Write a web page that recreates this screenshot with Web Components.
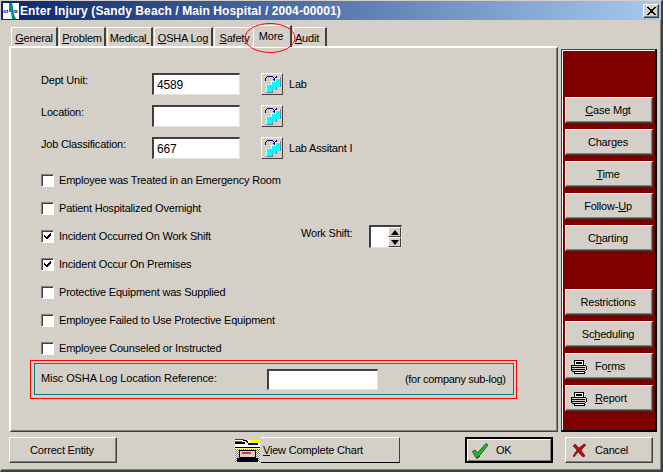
<!DOCTYPE html>
<html>
<head>
<meta charset="utf-8">
<title>Enter Injury</title>
<style>
  html, body { margin: 0; padding: 0; background: #d4d0c8; }
  body { font: 11px "Liberation Sans", Arial, sans-serif; letter-spacing: -.2px; color: #000; }
</style>
</head>
<body>
<app-window>
  <title-bar>Enter Injury (Sandy Beach / Main Hospital / 2004-00001)</title-bar>
  <main-area>
    <div slot="left">
      <tab-strip>
        <tab-item style="width:47px"><u>G</u>eneral</tab-item>
        <tab-item style="width:47px"><u>P</u>roblem</tab-item>
        <tab-item style="width:46px">Medical<u>&nbsp;</u></tab-item>
        <tab-item style="width:59px"><u>O</u>SHA Log</tab-item>
        <tab-item style="width:39px;border-right:0;padding-left:1px"><u>S</u>afety</tab-item>
        <tab-item style="width:39px;padding-right:2px" selected>More</tab-item>
        <tab-item style="width:34px;padding-right:5px"><u>A</u>udit</tab-item>
      </tab-strip>
      <form-panel>
        <lookup-field label="Dept Unit:" value="4589" note="Lab"></lookup-field>
        <lookup-field label="Location:"></lookup-field>
        <lookup-field label="Job Classification:" value="667" note="Lab Assitant I"></lookup-field>
        <check-list>
          <check-row>Employee was Treated in an Emergency Room</check-row>
          <check-row>Patient Hospitalized Overnight</check-row>
          <check-row checked>Incident Occurred On Work Shift<spin-box slot="extra" label="Work Shift:"></spin-box></check-row>
          <check-row checked>Incident Occur On Premises</check-row>
          <check-row>Protective Equipment was Supplied</check-row>
          <check-row>Employee Failed to Use Protective Equipment</check-row>
          <check-row>Employee Counseled or Instructed</check-row>
        </check-list>
        <note-box label="Misc OSHA Log Location Reference:" hint="(for company sub-log)"></note-box>
      </form-panel>
    </div>
    <side-bar slot="right">
      <win-button w="88"><u>C</u>ase Mgt</win-button>
      <win-button w="88">Charges</win-button>
      <win-button w="88"><u>T</u>ime</win-button>
      <win-button w="88">Follow-<u>U</u>p</win-button>
      <win-button w="88">C<u>h</u>arting</win-button>
      <win-button w="88" class="gap">Restrictions</win-button>
      <win-button w="88">Sc<u>h</u>eduling</win-button>
      <win-button w="88" icon="printer">Fo<u>r</u>ms</win-button>
      <win-button w="88" icon="printer"><u>R</u>eport</win-button>
    </side-bar>
  </main-area>
  <bottom-bar>
    <win-button w="108">Correct Entity</win-button>
    <win-button w="167" icon="chart"><u>V</u>iew Complete Chart</win-button>
    <win-button w="88" icon="ok" default>OK</win-button>
    <win-button w="88" icon="cancel">Cancel</win-button>
  </bottom-bar>
</app-window>

<script>
const ICONS = {
  lookup: `<svg width="20" height="20" viewBox="0 0 20 20" shape-rendering="crispEdges">
    <path d="M3 7V4h1V3h1V2h6v1h1v1h-1V3H5v1H4v3z" fill="#000080"/>
    <path d="M11 6V5h1V4h1V3h1V2h1v5h-3V6z" fill="#000080"/>
    <path d="M18 3h1v10h-4v3h-4v3H4v-1h6v-3h4v-3h4z" fill="#808080"/>
    <rect x="13" y="4" width="5" height="9" fill="#00ffff"/>
    <path d="M13 4h5v1h-4v8h-1z" fill="#fff"/>
    <rect x="9" y="7" width="5" height="9" fill="#00ffff"/>
    <path d="M9 7h5v1h-4v8H9z" fill="#fff"/>
    <rect x="4" y="10" width="6" height="8" fill="#00ffff"/>
    <path d="M4 10h6v1H5v7H4z" fill="#c8ffff"/>
  </svg>`,
  printer: `<svg width="17" height="15" viewBox="0 0 17 15" shape-rendering="crispEdges">
    <path d="M5 1h8l1 5H4z" fill="#fff" stroke="#000"/>
    <path d="M6 3h6M6 4h6" stroke="#000"/>
    <path d="M2 6h13l1 1v4l-1 1H2l-1-1V7z" fill="#d4d0c8" stroke="#000"/>
    <path d="M2 8h13M2 10h13" stroke="#000"/>
    <rect x="4" y="12" width="10" height="2" fill="#fff" stroke="#000"/>
  </svg>`,
  ok: `<svg width="18" height="17" viewBox="0 0 18 17">
    <path d="M1.5 9.5l2.5-1.500 2.500 3L15 1.500l2 1.500L7 15.500H5z" fill="#27b52c" stroke="#0b6a12" stroke-width="1"/>
    <path d="M5 16l2 0 2-2" fill="none" stroke="#800080"/>
  </svg>`,
  cancel: `<svg width="15" height="15" viewBox="0 0 15 15">
    <path d="M1 3l2-2 4 4 5-4 2 1-5 5 4 6-2 1-5-5-4 5-1-1 4-6z" fill="#a01818" stroke="#700" stroke-width=".6"/>
  </svg>`,
  chart: `<svg width="28" height="26" viewBox="0 0 28 26" shape-rendering="crispEdges">
    <defs><pattern id="d" width="2" height="2" patternUnits="userSpaceOnUse"><rect width="2" height="2" fill="#fff"/><rect width="1" height="1" fill="#808080"/><rect x="1" y="1" width="1" height="1" fill="#808080"/></pattern></defs>
    <rect width="28" height="26" fill="#d4d0c8"/>
    <rect x="2" y="3" width="25" height="7" fill="#fff"/>
    <rect x="2" y="2" width="9" height="1" fill="#c00"/>
    <rect x="2" y="4" width="7" height="1" fill="#0a0"/>
    <rect x="2" y="5" width="10" height="2" fill="#000"/>
    <rect x="17" y="3" width="9" height="3" fill="#ff0"/>
    <rect x="15" y="6" width="10" height="2" fill="#00c"/>
    <path d="M10 3h3l2 3" fill="none" stroke="#000"/>
    <rect x="2" y="10" width="25" height="1" fill="#000"/>
    <rect x="2" y="11" width="25" height="1" fill="#ffff80"/>
    <rect x="2" y="12" width="25" height="13" fill="url(#d)"/>
    <rect x="6" y="13" width="16" height="7" fill="#d4d0c8" stroke="#000"/>
    <rect x="9" y="15" width="9" height="2" fill="#e03030"/>
    <rect x="4" y="21" width="21" height="4" fill="#000"/>
  </svg>`
};

class AppWindow extends HTMLElement {
  constructor() {
    super();
    this.attachShadow({ mode: "open" }).innerHTML = `
    <style>
      :host {
        display: block;
        width: 663px;
        height: 472px;
        box-sizing: border-box;
        background: #d4d0c8;
        border-top: 1px solid #d4d0c8;
        border-left: 1px solid #d4d0c8;
        border-right: 2px solid #404040;
        border-bottom: 2px solid #404040;
        box-shadow: inset -1px -1px 0 #808080;
        overflow: hidden;
      }
    </style>
    <slot></slot>`;
  }
}

class TitleBar extends HTMLElement {
  constructor() {
    super();
    this.attachShadow({ mode: "open" }).innerHTML = `
    <style>
      :host {
        display: flex;
        align-items: center;
        height: 19px;
        width: 660px;
        background: linear-gradient(90deg, #0a246a, #a6caf0);
        color: #fff;
        font: bold 12px "Liberation Sans", Arial, sans-serif;
        box-sizing: border-box;
        padding: 0 2px;
      }
      .logo { width: 16px; height: 16px; margin-right: 1px; flex: none; }
      .text { flex: 1; white-space: nowrap; letter-spacing: .1px; }
      .close {
        width: 16px; height: 14px; flex: none;
        background: #d4d0c8;
        box-sizing: border-box;
        border-top: 1px solid #fff; border-left: 1px solid #fff;
        border-right: 1px solid #404040; border-bottom: 1px solid #404040;
        box-shadow: inset -1px -1px 0 #808080;
        display: flex; align-items: center; justify-content: center;
      }
    </style>
    <svg class="logo" viewBox="0 0 16 16">
      <rect width="16" height="16" fill="#fff"/>
      <path d="M6 0h3l1 4v5l3 7H9L8 9H6z" fill="#008a8a"/>
      <text x="0" y="10" font-size="6" font-family="Liberation Sans" font-weight="bold" fill="#0000c0">st</text>
      <text x="10" y="10" font-size="6" font-family="Liberation Sans" font-weight="bold" fill="#000060">ix</text>
    </svg>
    <span class="text"><slot></slot></span>
    <span class="close"><svg width="9" height="8" viewBox="0 0 9 8" shape-rendering="crispEdges"><path d="M0 0h2v1h1v1h3V1h1V0h2v1H8v1H7v1H6v2h1v1h1v1h1v1H7V7H6V6H3v1H2v1H0V7h1V6h1V5h1V3H2V2H1V1H0z"/></svg></span>`;
  }
}

class MainArea extends HTMLElement {
  constructor() {
    super();
    this.attachShadow({ mode: "open" }).innerHTML = `
    <style>
      :host { display: flex; padding: 4px 0 0 8px; height: 412px; box-sizing: border-box; }
      .left { width: 549px; flex: none; }
      .right { margin: 25px 0 0 3px; }
    </style>
    <div class="left"><slot name="left"></slot></div>
    <div class="right"><slot name="right"></slot></div>`;
  }
}

class TabStrip extends HTMLElement {
  constructor() {
    super();
    this.attachShadow({ mode: "open" }).innerHTML = `
    <style>
      :host {
        display: flex;
        align-items: flex-end;
        gap: 1px;
        height: 22px;
        padding-left: 2px;
        position: relative;
        z-index: 1;
      }
      svg { position: absolute; left: 234px; top: -2px; pointer-events: none; z-index: 3; }
    </style>
    <slot></slot>
    <svg width="54" height="32" viewBox="0 0 54 32"><ellipse cx="27" cy="16" rx="25" ry="14.500" fill="none" stroke="#f00"/></svg>`;
  }
}

class TabItem extends HTMLElement {
  constructor() {
    super();
    this.attachShadow({ mode: "open" }).innerHTML = `
    <style>
      :host {
        display: flex;
        align-items: center;
        justify-content: center;
        box-sizing: border-box;
        height: 19px;
        white-space: nowrap;
        background: #d4d0c8;
        border-top: 1px solid #fff;
        border-left: 1px solid #fff;
        border-right: 2px solid #404040;
        padding-top: 1px;
      }
      :host([selected]) {
        height: 22px;
        margin-bottom: -1px;
        margin-left: -1px;
        padding-bottom: 3px;
        position: relative;
        z-index: 2;
      }
    </style>
    <slot></slot>`;
  }
}

class FormPanel extends HTMLElement {
  constructor() {
    super();
    this.attachShadow({ mode: "open" }).innerHTML = `
    <style>
      :host {
        display: flex;
        flex-direction: column;
        gap: 10px;
        box-sizing: border-box;
        height: 386px;
        background: #d4d0c8;
        border-top: 2px solid #fff;
        border-left: 2px solid #fff;
        border-right: 1px solid #404040;
        border-bottom: 1px solid #404040;
        box-shadow: inset -1px -1px 0 #808080;
        padding: 25px 0 0 30px;
      }
    </style>
    <slot></slot>`;
  }
}

class LookupField extends HTMLElement {
  constructor() {
    super();
    this.attachShadow({ mode: "open" });
  }
  connectedCallback() {
    this.shadowRoot.innerHTML = `
    <style>
      :host { display: flex; height: 22px; }
      .label { width: 111px; flex: none; padding-top: 1px; line-height: 12px; white-space: nowrap; }
      .input {
        width: 88px; height: 22px; box-sizing: border-box; flex: none;
        background: #fff;
        border-top: 2px solid #404040; border-left: 2px solid #404040;
        border-right: 1px solid #e4e2dc; border-bottom: 1px solid #e4e2dc;
        padding: 3px 0 0 3px;
        line-height: 14px;
        font-size: 12px;
      }
      .pick {
        width: 22px; height: 22px; box-sizing: border-box; flex: none;
        margin-left: 21px;
        background: #d4d0c8;
        border-top: 1px solid #fff; border-left: 1px solid #fff;
        border-right: 1px solid #404040; border-bottom: 1px solid #404040;
        display: flex; align-items: center; justify-content: center;
      }
      .note { margin-left: 6px; line-height: 22px; white-space: nowrap; }
    </style>
    <span class="label">${this.getAttribute("label") || ""}</span>
    <span class="input">${this.getAttribute("value") || ""}</span>
    <span class="pick">${ICONS.lookup}</span>
    <span class="note">${this.getAttribute("note") || ""}</span>`;
  }
}

class CheckList extends HTMLElement {
  constructor() {
    super();
    this.attachShadow({ mode: "open" }).innerHTML = `
    <style>
      :host { display: flex; flex-direction: column; gap: 6px; }
    </style>
    <slot></slot>`;
  }
}

class CheckRow extends HTMLElement {
  constructor() {
    super();
    this.attachShadow({ mode: "open" });
  }
  connectedCallback() {
    const mark = this.hasAttribute("checked")
      ? `<svg width="9" height="9" viewBox="0 0 9 9" shape-rendering="crispEdges"><path d="M1 3h1v1h1v1h1V4h1V3h1V2h1V1h1v3H7v1H6v1H5v1H3V6H2V5H1z"/></svg>`
      : "";
    this.shadowRoot.innerHTML = `
    <style>
      :host { display: flex; align-items: center; height: 22px; white-space: nowrap; }
      .box {
        width: 13px; height: 13px; box-sizing: border-box; flex: none;
        background: #fff;
        border-top: 1px solid #808080; border-left: 1px solid #808080;
        border-right: 1px solid #fff; border-bottom: 1px solid #fff;
        box-shadow: inset 1px 1px 0 #404040;
        margin-right: 5px;
        display: flex; align-items: center; justify-content: center;
      }
      .text { width: 242px; flex: none; }
    </style>
    <span class="box">${mark}</span>
    <span class="text"><slot></slot></span>
    <slot name="extra"></slot>`;
  }
}

class SpinBox extends HTMLElement {
  constructor() {
    super();
    this.attachShadow({ mode: "open" });
  }
  connectedCallback() {
    this.shadowRoot.innerHTML = `
    <style>
      :host { display: flex; height: 22px; }
      .label { width: 68px; line-height: 12px; padding-top: 2px; white-space: nowrap; }
      .box {
        width: 33px; height: 23px; box-sizing: border-box;
        background: #fff;
        border-top: 2px solid #404040; border-left: 2px solid #404040;
        border-right: 1px solid #e4e2dc; border-bottom: 1px solid #e4e2dc;
        display: flex; justify-content: flex-end;
      }
      .arrows { width: 13px; display: flex; flex-direction: column; }
      .arrows span {
        flex: 1; background: #d4d0c8;
        border-top: 1px solid #fff; border-left: 1px solid #fff;
        border-bottom: 1px solid #404040; border-right: 1px solid #404040;
        display: flex; align-items: center; justify-content: center;
      }
      i { width: 0; height: 0; border-left: 4px solid transparent; border-right: 4px solid transparent; }
      .up { border-bottom: 5px solid #000; }
      .down { border-top: 5px solid #000; }
    </style>
    <span class="label">${this.getAttribute("label")}</span>
    <span class="box"><span class="arrows"><span><i class="up"></i></span><span><i class="down"></i></span></span></span>`;
  }
}

class NoteBox extends HTMLElement {
  constructor() {
    super();
    this.attachShadow({ mode: "open" });
  }
  connectedCallback() {
    this.shadowRoot.innerHTML = `
    <style>
      :host {
        display: block;
        box-sizing: border-box;
        width: 487px;
        height: 39px;
        margin: -9px 0 0 -11px;
        padding: 2px 2px 3px 3px;
        border: 1px solid #f00;
      }
      .teal {
        display: flex;
        align-items: center;
        height: 32px;
        box-sizing: border-box;
        border: 1px solid #008080;
        padding-left: 6px;
      }
      .label { width: 226px; flex: none; margin-top: -3px; white-space: nowrap; letter-spacing: -.1px; }
      .input {
        width: 111px; height: 21px; box-sizing: border-box; flex: none;
        background: #fff;
        border-top: 2px solid #404040; border-left: 2px solid #404040;
        border-right: 1px solid #e4e2dc; border-bottom: 1px solid #e4e2dc;
      }
      .hint { margin-left: 27px; white-space: nowrap; letter-spacing: -.3px; }
    </style>
    <div class="teal">
      <span class="label">${this.getAttribute("label")}</span>
      <span class="input"></span>
      <span class="hint">${this.getAttribute("hint")}</span>
    </div>`;
  }
}

class SideBar extends HTMLElement {
  constructor() {
    super();
    this.attachShadow({ mode: "open" }).innerHTML = `
    <style>
      :host {
        display: flex;
        flex-direction: column;
        gap: 6px;
        box-sizing: border-box;
        width: 96px;
        height: 383px;
        background: #800000;
        border-top: 1px solid #404040;
        border-left: 1px solid #404040;
        border-right: 2px solid #000;
        border-bottom: 2px solid #000;
        box-shadow: inset 1px 1px 0 #fff;
        padding: 47px 0 0 3px;
      }
      ::slotted(.gap) { margin-top: 32px; }
    </style>
    <slot></slot>`;
  }
}

class BottomBar extends HTMLElement {
  constructor() {
    super();
    this.attachShadow({ mode: "open" }).innerHTML = `
    <style>
      :host { display: flex; padding: 5px 0 0 8px; }
      ::slotted(:nth-child(2)) { margin-left: 116px; }
      ::slotted(:nth-child(3)) { margin-left: 65px; }
      ::slotted(:nth-child(4)) { margin-left: 12px; }
    </style>
    <slot></slot>`;
  }
}

class WinButton extends HTMLElement {
  constructor() {
    super();
    this.attachShadow({ mode: "open" });
  }
  connectedCallback() {
    const icon = this.getAttribute("icon");
    const width = this.getAttribute("w");
    const isDefault = this.hasAttribute("default");
    const layouts = {
      printer: "padding-left: 4px; gap: 8px; justify-content: flex-start;",
      ok: "padding-left: 4px; gap: 7px; justify-content: flex-start;",
      cancel: "padding-left: 6px; gap: 8px; justify-content: flex-start;",
      chart: "padding-left: 0; gap: 2px; justify-content: flex-start; border-left: 0;"
    };
    this.shadowRoot.innerHTML = `
    <style>
      :host {
        display: flex;
        align-items: center;
        justify-content: center;
        box-sizing: border-box;
        width: ${width}px;
        height: 26px;
        flex: none;
        white-space: nowrap;
        background: #d4d0c8;
        border-top: 1px solid #fff;
        border-left: 1px solid #fff;
        border-right: 1px solid #404040;
        border-bottom: 1px solid #404040;
        box-shadow: inset -1px -1px 0 #808080;
        ${icon ? layouts[icon] : "padding-right: 2px;"}
        ${isDefault ? "border: 2px solid #000; box-shadow: inset 1px 1px 0 #fff, inset -1px -1px 0 #808080;" : ""}
        ${icon === "chart" ? "border-bottom-color: #000; border-right-color: #404040; box-shadow: none;" : ""}
      }
      svg { display: block; flex: none; }
    </style>
    ${icon ? ICONS[icon] : ""}<span><slot></slot></span>`;
  }
}

customElements.define("app-window", AppWindow);
customElements.define("title-bar", TitleBar);
customElements.define("main-area", MainArea);
customElements.define("tab-strip", TabStrip);
customElements.define("tab-item", TabItem);
customElements.define("form-panel", FormPanel);
customElements.define("lookup-field", LookupField);
customElements.define("check-list", CheckList);
customElements.define("check-row", CheckRow);
customElements.define("spin-box", SpinBox);
customElements.define("note-box", NoteBox);
customElements.define("side-bar", SideBar);
customElements.define("bottom-bar", BottomBar);
customElements.define("win-button", WinButton);
</script>
</body>
</html>
